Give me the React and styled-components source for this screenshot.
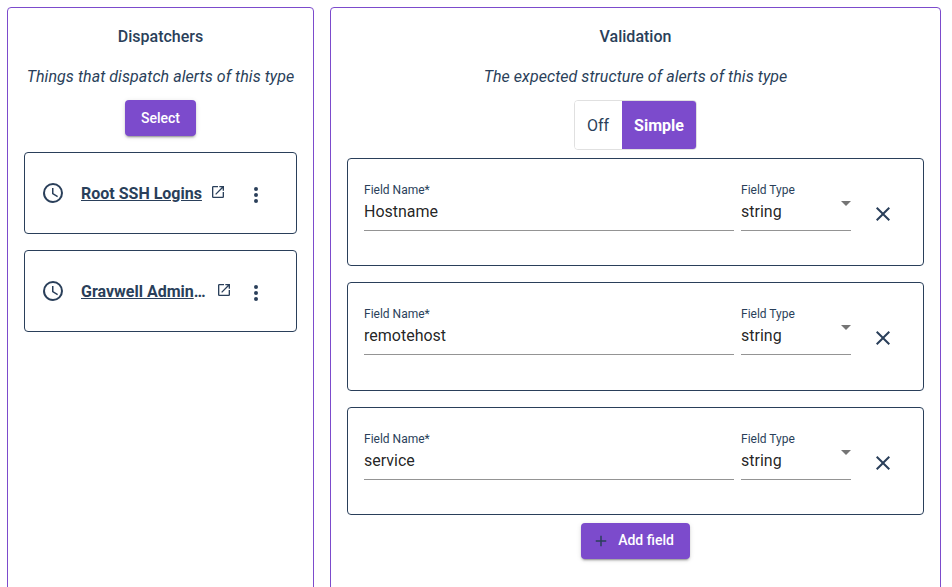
import React from "react";
import styled, { createGlobalStyle } from "styled-components";

const INK = "#2a3f5a";
const PURPLE = "#7c4bcc";

const GlobalStyle = createGlobalStyle`
  * { box-sizing: border-box; }
  html, body { margin: 0; background: #fff; overflow: hidden; }
  body { font-family: Roboto, sans-serif; font-size: 16px; line-height: 24px; color: ${INK}; }
  button, input { font: inherit; color: inherit; }
`;

const Page = styled.main`
  display: grid;
  grid-template-columns: 307px 611px;
  column-gap: 16px;
  height: 587px;
  padding: 7px 0 0 7px;
  overflow: hidden;
`;

const Panel = styled.section`
  display: flex;
  flex-direction: column;
  align-items: center;
  height: 640px;
  padding: 17px 16px 16px;
  border: 1px solid ${PURPLE};
  border-radius: 4px;
`;

const Title = styled.h3`
  margin: 0 0 16px;
  font-size: 16px;
  line-height: 24px;
  font-weight: 500;
`;

const Subtitle = styled.p`
  margin: 0 0 11px;
  font-style: italic;
  line-height: 24px;
  letter-spacing: 0.06px;
  white-space: nowrap;
`;

const RaisedButton = styled.button`
  display: flex;
  align-items: center;
  justify-content: center;
  flex: none;
  width: ${(p) => p.$width}px;
  height: 36px;
  padding: 0;
  border: 0;
  border-radius: 4px;
  background: ${PURPLE};
  color: #fff;
  font-size: 14px;
  font-weight: 500;
  box-shadow: 0 3px 1px -2px rgba(0, 0, 0, 0.2), 0 2px 2px 0 rgba(0, 0, 0, 0.14),
    0 1px 5px 0 rgba(0, 0, 0, 0.12);
`;

const DispatcherList = styled.div`
  display: flex;
  flex-direction: column;
  gap: 16px;
  width: 100%;
  margin-top: 16px;
`;

const DispatcherCard = styled.article`
  display: flex;
  align-items: center;
  height: 82px;
  padding: 0 28.5px 0 16px;
  border: 1px solid ${INK};
  border-radius: 4px;
`;

const DispatcherName = styled.div`
  max-width: 126.5px;
  margin: 0 8px 0 16px;
  padding-top: 2px;
  overflow: hidden;
  text-overflow: ellipsis;
  white-space: nowrap;
  font-weight: 700;
`;

const DispatcherLink = styled.a`
  text-decoration: underline;
`;

const Glyph = styled.svg`
  display: block;
  flex: none;
  width: ${(p) => p.$size}px;
  height: ${(p) => p.$size}px;
  fill: ${INK};
`;

const LinkIcon = styled.span`
  padding-bottom: 2px;
`;

const IconButton = styled.button`
  margin: 0 0 0 auto;
  padding: ${(p) => p.$drop || 0}px 0 0;
  border: 0;
  background: none;
`;

const Toggle = styled.div`
  display: flex;
  flex: none;
  width: 123px;
  height: 50px;
  margin-bottom: 8px;
  border: 1px solid #e0e0e0;
  border-radius: 4px;
  overflow: hidden;
`;

const ToggleOption = styled.button`
  flex: none;
  width: ${(p) => (p.$active ? 74 : 47)}px;
  padding: 2px ${(p) => (p.$active ? 0 : 1)}px 0 0;
  border: 0;
  line-height: 46px;
  background: ${(p) => (p.$active ? PURPLE : "#fff")};
  color: ${(p) => (p.$active ? "#fff" : INK)};
  font-weight: ${(p) => (p.$active ? 700 : 400)};
`;

const FieldList = styled.div`
  display: flex;
  flex-direction: column;
  gap: 16px;
  width: 100%;
  margin-bottom: 8px;
`;

const FieldCard = styled.article`
  display: flex;
  align-items: flex-start;
  height: 108.25px;
  padding: 22px 28px 0 16px;
  border: 1px solid ${INK};
  border-radius: 4px;
`;

const FormField = styled.label`
  display: flex;
  flex-direction: column;
  width: ${(p) => p.$width}px;
  height: 50px;
  margin-right: ${(p) => p.$gap || 0}px;
  border-bottom: 1px solid #949494;
`;

const Label = styled.span`
  font-size: 12px;
  line-height: 18px;
  white-space: nowrap;
`;

const ValueRow = styled.span`
  display: flex;
  justify-content: space-between;
  height: 24px;
  margin-top: 1px;
  color: rgba(0, 0, 0, 0.87);
`;

const TextInput = styled.input`
  width: 100%;
  height: 24px;
  padding: 0;
  border: 0;
  outline: 0;
  background: none;
  color: rgba(0, 0, 0, 0.87);
`;

const Caret = styled.span`
  width: 0;
  height: 0;
  margin-top: 1px;
  border: 5px solid transparent;
  border-top-color: #757575;
  border-bottom: 0;
`;

const AddContent = styled.span`
  display: flex;
  align-items: center;
  gap: 8px;
  padding: 0 5px 1px 0;
`;

const AddIcon = styled.span`
  padding-top: 2px;
`;

const PATHS = {
  clock:
    "M12,20A8,8 0 0,0 20,12A8,8 0 0,0 12,4A8,8 0 0,0 4,12A8,8 0 0,0 12,20M12,2A10,10 0 0,1 22,12A10,10 0 0,1 12,22C6.47,22 2,17.5 2,12A10,10 0 0,1 12,2M12.5,7V12.25L17,14.92L16.25,16.15L11,13V7H12.5Z",
  open: "M14,3V5H17.59L7.76,14.83L9.17,16.24L19,6.41V10H21V3M19,19H5V5H12V3H5C3.89,3 3,3.9 3,5V19A2,2 0 0,0 5,21H19A2,2 0 0,0 21,19V12H19V19Z",
  dots: "M12,16A2,2 0 0,1 14,18A2,2 0 0,1 12,20A2,2 0 0,1 10,18A2,2 0 0,1 12,16M12,10A2,2 0 0,1 14,12A2,2 0 0,1 12,14A2,2 0 0,1 10,12A2,2 0 0,1 12,10M12,4A2,2 0 0,1 14,6A2,2 0 0,1 12,8A2,2 0 0,1 10,6A2,2 0 0,1 12,4Z",
  close:
    "M19,6.41L17.59,5L12,10.59L6.41,5L5,6.41L10.59,12L5,17.59L6.41,19L12,13.41L17.59,19L19,17.59L13.41,12L19,6.41Z",
  plus: "M19,13H13V19H11V13H5V11H11V5H13V11H19V13Z",
};

function Icon({ name, size = 24 }) {
  return (
    <Glyph $size={size} viewBox="0 0 24 24" aria-hidden="true">
      <path d={PATHS[name]} />
    </Glyph>
  );
}

function Dispatcher({ name }) {
  return (
    <DispatcherCard>
      <Icon name="clock" />
      <DispatcherName>
        <DispatcherLink>{name}</DispatcherLink>
      </DispatcherName>
      <LinkIcon>
        <Icon name="open" size={16} />
      </LinkIcon>
      <IconButton $drop={4} aria-label="More actions">
        <Icon name="dots" />
      </IconButton>
    </DispatcherCard>
  );
}

function Field({ name, type }) {
  return (
    <FieldCard>
      <FormField $width={370} $gap={7}>
        <Label>Field Name*</Label>
        <ValueRow>
          <TextInput defaultValue={name} />
        </ValueRow>
      </FormField>
      <FormField $width={110}>
        <Label>Field Type</Label>
        <ValueRow>
          {type}
          <Caret />
        </ValueRow>
      </FormField>
      <IconButton $drop={21} aria-label="Remove field">
        <Icon name="close" />
      </IconButton>
    </FieldCard>
  );
}

export default function App() {
  return (
    <>
      <GlobalStyle />
      <Page>
        <Panel>
          <Title>Dispatchers</Title>
          <Subtitle>Things that dispatch alerts of this type</Subtitle>
          <RaisedButton $width={71}>Select</RaisedButton>
          <DispatcherList>
            <Dispatcher name="Root SSH Logins" />
            <Dispatcher name="Gravwell Admin Logins" />
          </DispatcherList>
        </Panel>
        <Panel>
          <Title>Validation</Title>
          <Subtitle>The expected structure of alerts of this type</Subtitle>
          <Toggle>
            <ToggleOption>Off</ToggleOption>
            <ToggleOption $active>Simple</ToggleOption>
          </Toggle>
          <FieldList>
            <Field name="Hostname" type="string" />
            <Field name="remotehost" type="string" />
            <Field name="service" type="string" />
          </FieldList>
          <RaisedButton $width={109}>
            <AddContent>
              <AddIcon>
                <Icon name="plus" size={18} />
              </AddIcon>
              <span>Add field</span>
            </AddContent>
          </RaisedButton>
        </Panel>
      </Page>
    </>
  );
}
